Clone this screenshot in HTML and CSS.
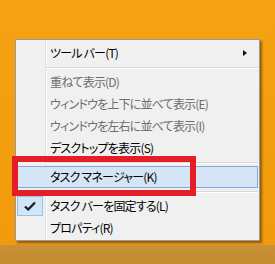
FILE: index.html
```html
<!DOCTYPE html>
<html lang="ja">
<head>
    <meta charset="UTF-8">
    <title>タスク バー メニュー</title>
    <link rel="stylesheet" href="styles.css">
</head>
<body>
    <div class="desktop">
        <div class="menu">
            <div class="item">
                <span class="icon"></span>
                <span class="label">ツール バー(T)</span>
                <span class="arrow"></span>
            </div>
            <div class="sep"></div>
            <div class="item disabled"><span class="icon"></span><span class="label">重ねて表示(D)</span></div>
            <div class="item disabled"><span class="icon"></span><span class="label">ウィンドウを上下に並べて表示(E)</span></div>
            <div class="item disabled"><span class="icon"></span><span class="label">ウィンドウを左右に並べて表示(I)</span></div>
            <div class="item"><span class="icon"></span><span class="label">デスクトップを表示(S)</span></div>
            <div class="sep"></div>
            <div class="item active"><span class="icon"></span><span class="label">タスク マネージャー(K)</span></div>
            <div class="sep"></div>
            <div class="item">
                <span class="icon checked">
                    <svg width="12" height="10" viewBox="0 0 12 10">
                        <path d="M1 5.5 L4.2 8.5 L11 1.5" fill="none" stroke="#15202c" stroke-width="2.3"/>
                    </svg>
                </span>
                <span class="label">タスク バーを固定する(L)</span>
            </div>
            <div class="item"><span class="icon"></span><span class="label">プロパティ(R)</span></div>

            <div class="callout"></div>
        </div>
    </div>
    <div class="taskbar"></div>
</body>
</html>
```

FILE: styles.css
```css
* {
    margin: 0;
    padding: 0;
    box-sizing: border-box;
}

body {
    width: 275px;
    height: 264px;
    overflow: hidden;
    font-family: "Noto Sans CJK JP", "Noto Sans", sans-serif;
    font-size: 12px;
    letter-spacing: -0.8px;
    font-feature-settings: "palt";
}

.desktop {
    height: 245px;
    padding: 39px 0 0 15px;
    background: linear-gradient(180deg, #f5a313 0%, #f19a0c 100%);
}

.taskbar {
    height: 19px;
    background: linear-gradient(180deg, #c8913a 0%, #c48c2c 100%);
}

.menu {
    position: relative;
    width: 245px;
    height: 202px;
    padding: 2px 1px 1px 0;
    border: 1px solid #9a9a9a;
    background: linear-gradient(to right, #f0f0f0 29px, #e2e2e2 29px, #e2e2e2 30px, #fff 30px, #fff 31px, #f0f0f0 31px);
    box-shadow: 2px 2px 2px rgba(60, 40, 10, 0.55);
}

.item {
    display: flex;
    align-items: center;
    height: 22px;
    color: #000;
    border: 1px solid transparent;
}

.item.disabled {
    color: #6d6d6d;
}

.item.active {
    background: #d5e5f6;
    border-color: #85a9d6;
}

.icon {
    display: flex;
    align-items: center;
    justify-content: center;
    width: 26px;
    height: 20px;
    margin-right: 7px;
}

.icon.checked {
    background: #d1e6f7;
    border: 1px solid #93c3ea;
}

.label {
    flex: 1;
    white-space: nowrap;
    line-height: 1;
}

.arrow {
    width: 0;
    height: 0;
    margin-right: 10px;
    border-top: 3.5px solid transparent;
    border-bottom: 3.5px solid transparent;
    border-left: 4px solid #111;
}

.sep {
    height: 7px;
    margin-left: 30px;
    background: linear-gradient(#f0f0f0 3px, #d7d7d7 3px, #d7d7d7 4px, #fff 4px, #fff 5px, #f0f0f0 5px);
}

.callout {
    position: absolute;
    left: -4px;
    top: 116px;
    width: 184px;
    height: 40px;
    border: 6px solid #e41d26;
}
```
